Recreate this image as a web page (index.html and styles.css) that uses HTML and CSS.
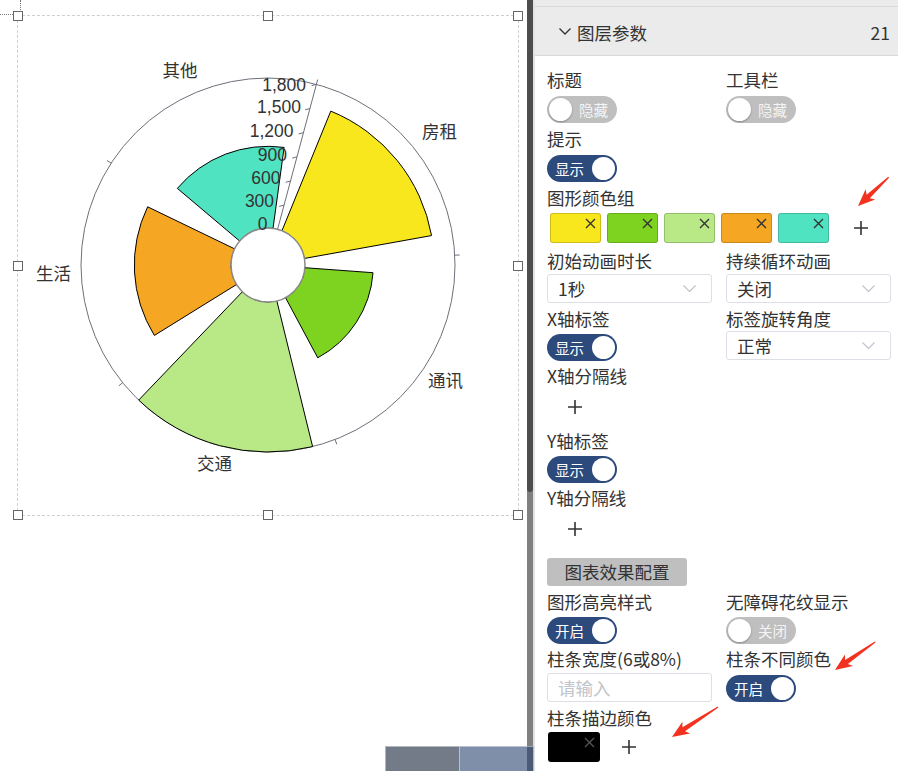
FILE: index.html
```html
<!DOCTYPE html>
<html>
<head>
    <meta charset="utf-8">
    <link rel="stylesheet" href="styles.css">
</head>
<body>
<div class="app">
    <div class="stage">
        <div class="guide-h"></div>
        <div class="guide-v"></div>

        <div class="frame">
            <svg class="chart" width="500" height="499" viewBox="18 16 500 499">
                <circle class="axis-ring" cx="268" cy="265" r="187"/>

                <path class="bar c1" d="M281.98,230.74 L330.79,111.12 A166.2,166.2 0 0 1 431.57,235.57 L304.42,258.45 A37,37 0 0 0 281.98,230.74 Z"/>
                <path class="bar c2" d="M304.90,267.71 L373.02,272.71 A105.3,105.3 0 0 1 317.76,357.80 L285.48,297.61 A37,37 0 0 0 304.90,267.71 Z"/>
                <path class="bar c3" d="M276.83,300.93 L312.61,446.60 A187,187 0 0 1 138.69,400.08 L242.41,291.73 A37,37 0 0 0 276.83,300.93 Z"/>
                <path class="bar c4" d="M236.55,284.50 L154.37,335.45 A133.7,133.7 0 0 1 147.63,206.81 L234.69,248.90 A37,37 0 0 0 236.55,284.50 Z"/>
                <path class="bar c5" d="M239.74,241.12 L177.34,188.38 A118.7,118.7 0 0 1 284.11,147.40 L273.02,228.34 A37,37 0 0 0 239.74,241.12 Z"/>

                <!-- angle axis ticks -->
                <g class="axis-line">
                    <line x1="454.74" y1="255.21" x2="459.74" y2="254.95"/>
                    <line x1="335.02" y1="439.58" x2="336.81" y2="444.25"/>
                    <line x1="122.67" y1="382.68" x2="118.79" y2="385.83"/>
                    <line x1="111.17" y1="163.15" x2="106.98" y2="160.43"/>
                    <!-- radius axis -->
                    <line x1="277.58" y1="229.26" x2="317.69" y2="79.54"/>
                    <line x1="277.58" y1="229.26" x2="272.75" y2="230.55"/>
                    <line x1="284.05" y1="205.11" x2="279.22" y2="206.40"/>
                    <line x1="290.52" y1="180.96" x2="285.69" y2="182.25"/>
                    <line x1="296.99" y1="156.82" x2="292.16" y2="158.11"/>
                    <line x1="303.46" y1="132.67" x2="298.63" y2="133.96"/>
                    <line x1="309.93" y1="108.52" x2="305.10" y2="109.81"/>
                    <line x1="316.40" y1="84.37" x2="311.57" y2="85.66"/>
                </g>

                <circle class="hole" cx="268" cy="265" r="37"/>

                <g class="radius-labels">
                    <text x="267.6" y="224">0</text>
                    <text x="274.1" y="201">300</text>
                    <text x="280.5" y="178">600</text>
                    <text x="287.0" y="155">900</text>
                    <text x="293.5" y="130.5">1,200</text>
                    <text x="300.9" y="107">1,500</text>
                    <text x="306.0" y="84.5">1,800</text>
                </g>

                <g class="cat-labels">
                    <text x="439.5" y="130">房租</text>
                    <text x="445.5" y="379">通讯</text>
                    <text x="214.5" y="462">交通</text>
                    <text x="53.5" y="272">生活</text>
                    <text x="180" y="69">其他</text>
                </g>
            </svg>

            <span class="handle at-tl"></span>
            <span class="handle at-tc"></span>
            <span class="handle at-tr"></span>
            <span class="handle at-ml"></span>
            <span class="handle at-mr"></span>
            <span class="handle at-bl"></span>
            <span class="handle at-bc"></span>
            <span class="handle at-br"></span>
        </div>
    </div>

    <div class="scrollbar"><div class="thumb"></div></div>

    <div class="panel">
        <div class="panel-top"></div>
        <div class="panel-head">
            <svg class="caret" width="12" height="7" viewBox="0 0 12 7"><polyline points="0.5,0.5 6,6 11.5,0.5"/></svg>
            <span class="panel-title">图层参数</span>
            <span class="panel-count">21</span>
        </div>

        <div class="panel-body">
            <div class="row">
                <div class="field">
                    <div class="label">标题</div>
                    <div class="switch off"><span class="knob"></span><span>隐藏</span></div>
                </div>
                <div class="field">
                    <div class="label">工具栏</div>
                    <div class="switch off"><span class="knob"></span><span>隐藏</span></div>
                </div>
            </div>

            <div class="row">
                <div class="field">
                    <div class="label">提示</div>
                    <div class="switch on"><span>显示</span><span class="knob"></span></div>
                </div>
            </div>

            <div class="row row-colors">
                <div class="field wide">
                    <div class="label">图形颜色组</div>
                    <div class="swatches">
                        <div class="swatch c1"><svg class="x" width="11" height="11" viewBox="0 0 11 11"><path d="M1 1L10 10M10 1L1 10"/></svg></div>
                        <div class="swatch c2"><svg class="x" width="11" height="11" viewBox="0 0 11 11"><path d="M1 1L10 10M10 1L1 10"/></svg></div>
                        <div class="swatch c3"><svg class="x" width="11" height="11" viewBox="0 0 11 11"><path d="M1 1L10 10M10 1L1 10"/></svg></div>
                        <div class="swatch c4"><svg class="x" width="11" height="11" viewBox="0 0 11 11"><path d="M1 1L10 10M10 1L1 10"/></svg></div>
                        <div class="swatch c5"><svg class="x" width="11" height="11" viewBox="0 0 11 11"><path d="M1 1L10 10M10 1L1 10"/></svg></div>
                        <svg class="plus add-color" width="14" height="14" viewBox="0 0 14 14"><path d="M7 0V14M0 7H14"/></svg>
                    </div>
                </div>
            </div>

            <div class="row">
                <div class="field">
                    <div class="label">初始动画时长</div>
                    <div class="select"><span>1秒</span><svg class="chev" width="13" height="7" viewBox="0 0 13 7"><polyline points="0.5,0.5 6.5,6.5 12.5,0.5"/></svg></div>
                </div>
                <div class="field">
                    <div class="label">持续循环动画</div>
                    <div class="select"><span>关闭</span><svg class="chev" width="13" height="7" viewBox="0 0 13 7"><polyline points="0.5,0.5 6.5,6.5 12.5,0.5"/></svg></div>
                </div>
            </div>

            <div class="row tight">
                <div class="field">
                    <div class="label">X轴标签</div>
                    <div class="switch on"><span>显示</span><span class="knob"></span></div>
                </div>
                <div class="field">
                    <div class="label">标签旋转角度</div>
                    <div class="select flush"><span>正常</span><svg class="chev" width="13" height="7" viewBox="0 0 13 7"><polyline points="0.5,0.5 6.5,6.5 12.5,0.5"/></svg></div>
                </div>
            </div>

            <div class="row">
                <div class="field">
                    <div class="label">X轴分隔线</div>
                    <div class="add-line"><svg class="plus" width="14" height="14" viewBox="0 0 14 14"><path d="M7 0V14M0 7H14"/></svg></div>
                </div>
            </div>

            <div class="row tight">
                <div class="field">
                    <div class="label">Y轴标签</div>
                    <div class="switch on"><span>显示</span><span class="knob"></span></div>
                </div>
            </div>

            <div class="row">
                <div class="field">
                    <div class="label">Y轴分隔线</div>
                    <div class="add-line"><svg class="plus" width="14" height="14" viewBox="0 0 14 14"><path d="M7 0V14M0 7H14"/></svg></div>
                </div>
            </div>

            <div class="btn">图表效果配置</div>

            <div class="row tight">
                <div class="field">
                    <div class="label">图形高亮样式</div>
                    <div class="switch on"><span>开启</span><span class="knob"></span></div>
                </div>
                <div class="field">
                    <div class="label">无障碍花纹显示</div>
                    <div class="switch off"><span class="knob"></span><span>关闭</span></div>
                </div>
            </div>

            <div class="row">
                <div class="field">
                    <div class="label">柱条宽度(6或8%)</div>
                    <div class="input">请输入</div>
                </div>
                <div class="field">
                    <div class="label">柱条不同颜色</div>
                    <div class="switch on"><span>开启</span><span class="knob"></span></div>
                </div>
            </div>

            <div class="row">
                <div class="field wide">
                    <div class="label">柱条描边颜色</div>
                    <div class="swatches stroke-row">
                        <div class="swatch black"><svg class="x" width="11" height="11" viewBox="0 0 11 11"><path d="M1 1L10 10M10 1L1 10"/></svg></div>
                        <svg class="plus add-stroke" width="14" height="14" viewBox="0 0 14 14"><path d="M7 0V14M0 7H14"/></svg>
                    </div>
                </div>
            </div>
        </div>
    </div>

    <div class="dock">
        <div class="dock-item"></div>
        <div class="dock-item current"></div>
    </div>

    <svg class="marks" width="898" height="771" viewBox="0 0 898 771">
        <polygon transform="translate(858 206) rotate(136.9)" points="0,0 -17,-7 -14,-2.4 -42,-0.6 -42,0.6 -14,2.4 -17,7"/>
        <polygon transform="translate(835 670) rotate(145)" points="0,0 -17,-7 -14,-2.4 -49,-0.6 -49,0.6 -14,2.4 -17,7"/>
        <polygon transform="translate(672 737) rotate(146.9)" points="0,0 -17,-7 -14,-2.4 -55,-0.6 -55,0.6 -14,2.4 -17,7"/>
    </svg>
</div>
</body>
</html>
```

FILE: styles.css
```css
body {
    margin: 0;
    font-family: "Noto Sans CJK SC", "Liberation Sans", sans-serif;
    color: #333;
    background: #fff;
}
.app {
    position: relative;
    display: flex;
    width: 898px;
    height: 771px;
    overflow: hidden;
}

/* canvas side */
.stage {
    position: relative;
    width: 527px;
    flex: none;
}
.guide-h {
    position: absolute;
    left: 0;
    top: 14px;
    width: 13px;
    border-top: 1px dotted #777;
}
.guide-v {
    position: absolute;
    left: 20px;
    top: 0;
    height: 10px;
    border-left: 1px dotted #777;
}
.frame {
    position: relative;
    box-sizing: border-box;
    width: 502px;
    height: 501px;
    margin: 15px 0 0 17px;
    border: 1px dashed #cfcfcf;
}
.chart {
    display: block;
    overflow: visible;
}
.axis-ring {
    fill: none;
    stroke: #6e7079;
    stroke-width: 1;
}
.bar {
    stroke: #000;
    stroke-width: 1;
}
.c1 { fill: #f8e71c; background: #f8e71c; }
.c2 { fill: #7ed321; background: #7ed321; }
.c3 { fill: #b8e986; background: #b8e986; }
.c4 { fill: #f5a623; background: #f5a623; }
.c5 { fill: #50e3c2; background: #50e3c2; }
.axis-line line {
    stroke: #6e7079;
    stroke-width: 1;
}
.hole {
    fill: #fff;
    stroke: #8a8a8a;
    stroke-width: 1.5;
}
.radius-labels text {
    font-family: "Liberation Sans", sans-serif;
    font-size: 17.5px;
    fill: #333;
    text-anchor: end;
    dominant-baseline: central;
}
.cat-labels text {
    font-family: "Noto Sans CJK SC", sans-serif;
    font-size: 17.5px;
    fill: #333;
    text-anchor: middle;
    dominant-baseline: central;
}
.handle {
    position: absolute;
    width: 10px;
    height: 10px;
    box-sizing: border-box;
    background: #fff;
    border: 1px solid #666;
    transform: translate(-50%, -50%);
}
.at-tl { left: 0; top: 0; }
.at-tc { left: 50%; top: 0; }
.at-tr { left: 100%; top: 0; }
.at-ml { left: 0; top: 50%; }
.at-mr { left: 100%; top: 50%; }
.at-bl { left: 0; top: 100%; }
.at-bc { left: 50%; top: 100%; }
.at-br { left: 100%; top: 100%; }

.scrollbar {
    width: 6px;
    flex: none;
    background: #808080;
}
.thumb {
    height: 492px;
    background: #4d4d4d;
    border-radius: 0 0 3px 3px;
}

/* settings panel */
.panel {
    flex: 1;
    border-left: 2px solid #e3e3e3;
}
.panel-top {
    height: 6px;
    background: #ebebeb;
}
.panel-head {
    display: flex;
    align-items: center;
    height: 45px;
    padding: 3px 9px 0 24px;
    background: #ebebeb;
    border-top: 1px solid #d9d9d9;
    border-bottom: 1px solid #d9d9d9;
    font-size: 17.5px;
}
.caret {
    margin: -3px 6px 0 0;
}
.caret polyline {
    fill: none;
    stroke: #333;
    stroke-width: 1.3;
}
.panel-title {
    flex: 1;
}
.panel-body {
    padding: 12px 8px 0 12px;
}
.row {
    display: grid;
    grid-template-columns: 179px 1fr;
    margin-bottom: 4px;
}
.row.tight {
    margin-bottom: 3px;
}
.field.wide {
    grid-column: 1 / 3;
}
.row-colors {
    margin-bottom: 6px;
}
.label {
    font-size: 17.5px;
    line-height: 24px;
    white-space: nowrap;
}
.switch {
    display: flex;
    align-items: center;
    justify-content: space-between;
    box-sizing: border-box;
    width: 70px;
    height: 27px;
    margin-top: 4px;
    border-radius: 14px;
    font-size: 14.5px;
    color: #fff;
}
.tight .switch {
    margin-top: 3px;
}
.switch.on {
    background: #2c4a7c;
    padding: 0 2px 0 8px;
}
.switch.off {
    background: #bfbfbf;
    padding: 0 9px 0 2px;
    color: #f4f4f4;
}
.knob {
    width: 23px;
    height: 23px;
    border-radius: 50%;
    background: #fff;
}
.off .knob {
    box-shadow: 0 1px 2px rgba(0, 0, 0, 0.3);
}
.swatches {
    display: flex;
    align-items: center;
    gap: 6px;
    margin: 3px 0 0 3px;
}
.swatch {
    display: flex;
    justify-content: flex-end;
    box-sizing: border-box;
    width: 51px;
    height: 30px;
    padding: 4px 4px 0 0;
    border: 1px solid rgba(0, 0, 0, 0.18);
    border-radius: 3px;
}
.x path {
    stroke: #333;
    stroke-width: 1.4;
}
.swatch.black {
    width: 52px;
    background: #000;
}
.black .x path {
    stroke: #555;
}
.stroke-row {
    margin: 2px 0 0 1px;
}
.plus path {
    stroke: #333;
    stroke-width: 1.6;
}
.add-color {
    margin-left: 19px;
}
.add-stroke {
    margin-left: 16px;
}
.add-line {
    display: flex;
    align-items: center;
    height: 37px;
    padding-left: 21px;
}
.select {
    display: flex;
    align-items: center;
    justify-content: space-between;
    box-sizing: border-box;
    width: 165px;
    height: 29px;
    margin-top: 1px;
    padding: 0 15px 0 10px;
    border: 1px solid #dcdfe6;
    border-radius: 3px;
    font-size: 17.5px;
}
.select.flush {
    margin-top: 0;
}
.chev polyline {
    fill: none;
    stroke: #c0c4cc;
    stroke-width: 1.2;
}
.input {
    box-sizing: border-box;
    width: 165px;
    height: 29px;
    margin-top: 2px;
    padding-left: 10px;
    border: 1px solid #dcdfe6;
    border-radius: 3px;
    font-size: 17.5px;
    line-height: 27px;
    color: #c0c4cc;
}
.btn {
    width: 140px;
    height: 28px;
    margin: 11px 0 4px;
    background: #bfbfbf;
    border-radius: 3px;
    font-size: 17.5px;
    line-height: 28px;
    text-align: center;
}

/* overlays */
.dock {
    position: absolute;
    left: 385px;
    top: 746px;
    display: flex;
}
.dock-item {
    width: 73px;
    height: 30px;
    border: 1px solid rgba(255, 255, 255, 0.45);
    border-right: none;
    background: rgba(18, 30, 52, 0.59);
}
.dock-item.current {
    background: rgba(38, 65, 111, 0.59);
    border-right: 1px solid rgba(255, 255, 255, 0.45);
}
.marks {
    position: absolute;
    left: 0;
    top: 0;
    pointer-events: none;
}
.marks polygon {
    fill: #f2321e;
}
```
